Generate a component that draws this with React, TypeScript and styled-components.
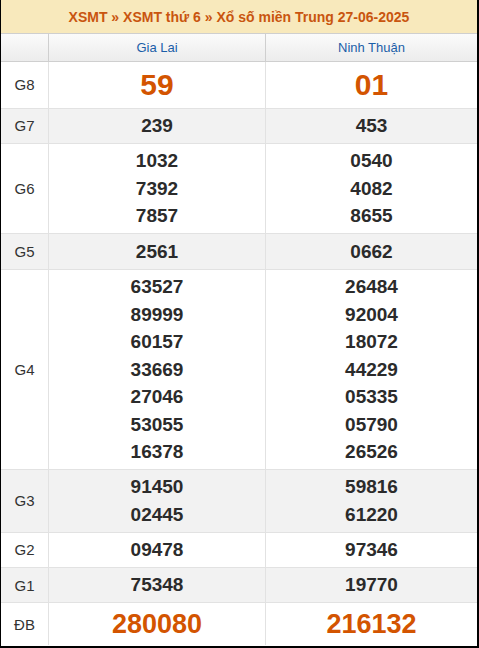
import React from "react";
import styled, { createGlobalStyle } from "styled-components";

const Global = createGlobalStyle`
  html, body { margin: 0; padding: 0; background: #fff; }
  body { font-family: "Liberation Sans", Arial, sans-serif; }
`;

const Frame = styled.div`
  width: 479px;
  height: 648px;
  box-sizing: border-box;
  border-left: 1px solid #000;
  border-right: 2px solid #000;
  border-bottom: 2px solid #000;
  overflow: hidden;
  background: #fff;
`;

const Title = styled.div`
  height: 33px;
  border-bottom: 1px solid #cfcfcf;
  background: #f8e9bc;
  color: #c9550f;
  font-weight: bold;
  font-size: 14px;
  display: flex;
  align-items: center;
  justify-content: center;
`;

const Row = styled.div<{ $alt?: boolean; $head?: boolean; $last?: boolean }>`
  display: grid;
  grid-template-columns: 48px 217px 1fr;
  border-bottom: ${(p) => (p.$last ? "none" : p.$head ? "1px solid #cfcfcf" : "1px solid #e2e2e2")};
  background: ${(p) =>
    p.$head ? "linear-gradient(#fbfbfb, #ececec)" : p.$alt ? "#f2f2f2" : "#fff"};
`;

const Cell = styled.div<{ $head?: boolean; $end?: boolean }>`
  box-sizing: border-box;
  border-right: ${(p) => (p.$end ? "none" : p.$head ? "1px solid #cfcfcf" : "1px solid #e2e2e2")};
  display: flex;
  flex-direction: column;
  align-items: center;
  justify-content: center;
`;

const Province = styled.div`
  height: 27px;
  display: flex;
  align-items: center;
  color: #1b5ea8;
  font-size: 13px;
`;

const Label = styled.span`
  font-size: 15px;
  color: #333;
`;

const Numbers = styled.div<{ $size: "big" | "db" | "norm" }>`
  padding: 3.4px 0;
  display: flex;
  flex-direction: column;
  align-items: center;
  font-weight: bold;
  font-size: ${(p) => (p.$size === "big" ? "30px" : p.$size === "db" ? "27px" : "19px")};
  line-height: ${(p) => (p.$size === "big" ? "39px" : p.$size === "db" ? "35px" : "27.5px")};
  color: ${(p) => (p.$size === "norm" ? "#2b2b2b" : "#d35400")};
`;

type Prize = { label: string; a: string[]; b: string[]; size: "big" | "db" | "norm" };

const prizes: Prize[] = [
  { label: "G8", a: ["59"], b: ["01"], size: "big" },
  { label: "G7", a: ["239"], b: ["453"], size: "norm" },
  { label: "G6", a: ["1032", "7392", "7857"], b: ["0540", "4082", "8655"], size: "norm" },
  { label: "G5", a: ["2561"], b: ["0662"], size: "norm" },
  {
    label: "G4",
    a: ["63527", "89999", "60157", "33669", "27046", "53055", "16378"],
    b: ["26484", "92004", "18072", "44229", "05335", "05790", "26526"],
    size: "norm",
  },
  { label: "G3", a: ["91450", "02445"], b: ["59816", "61220"], size: "norm" },
  { label: "G2", a: ["09478"], b: ["97346"], size: "norm" },
  { label: "G1", a: ["75348"], b: ["19770"], size: "norm" },
  { label: "ĐB", a: ["280080"], b: ["216132"], size: "db" },
];

export default function App() {
  return (
    <>
      <Global />
      <Frame>
        <Title>XSMT » XSMT thứ 6 » Xổ số miền Trung 27-06-2025</Title>
        <Row $head>
          <Cell $head />
          <Cell $head>
            <Province>Gia Lai</Province>
          </Cell>
          <Cell $head $end>
            <Province>Ninh Thuận</Province>
          </Cell>
        </Row>
        {prizes.map((p, i) => (
          <Row key={p.label} $alt={i % 2 === 1} $last={i === prizes.length - 1}>
            <Cell>
              <Label>{p.label}</Label>
            </Cell>
            <Cell>
              <Numbers $size={p.size}>
                {p.a.map((n) => (
                  <span key={n}>{n}</span>
                ))}
              </Numbers>
            </Cell>
            <Cell $end>
              <Numbers $size={p.size}>
                {p.b.map((n) => (
                  <span key={n}>{n}</span>
                ))}
              </Numbers>
            </Cell>
          </Row>
        ))}
      </Frame>
    </>
  );
}
